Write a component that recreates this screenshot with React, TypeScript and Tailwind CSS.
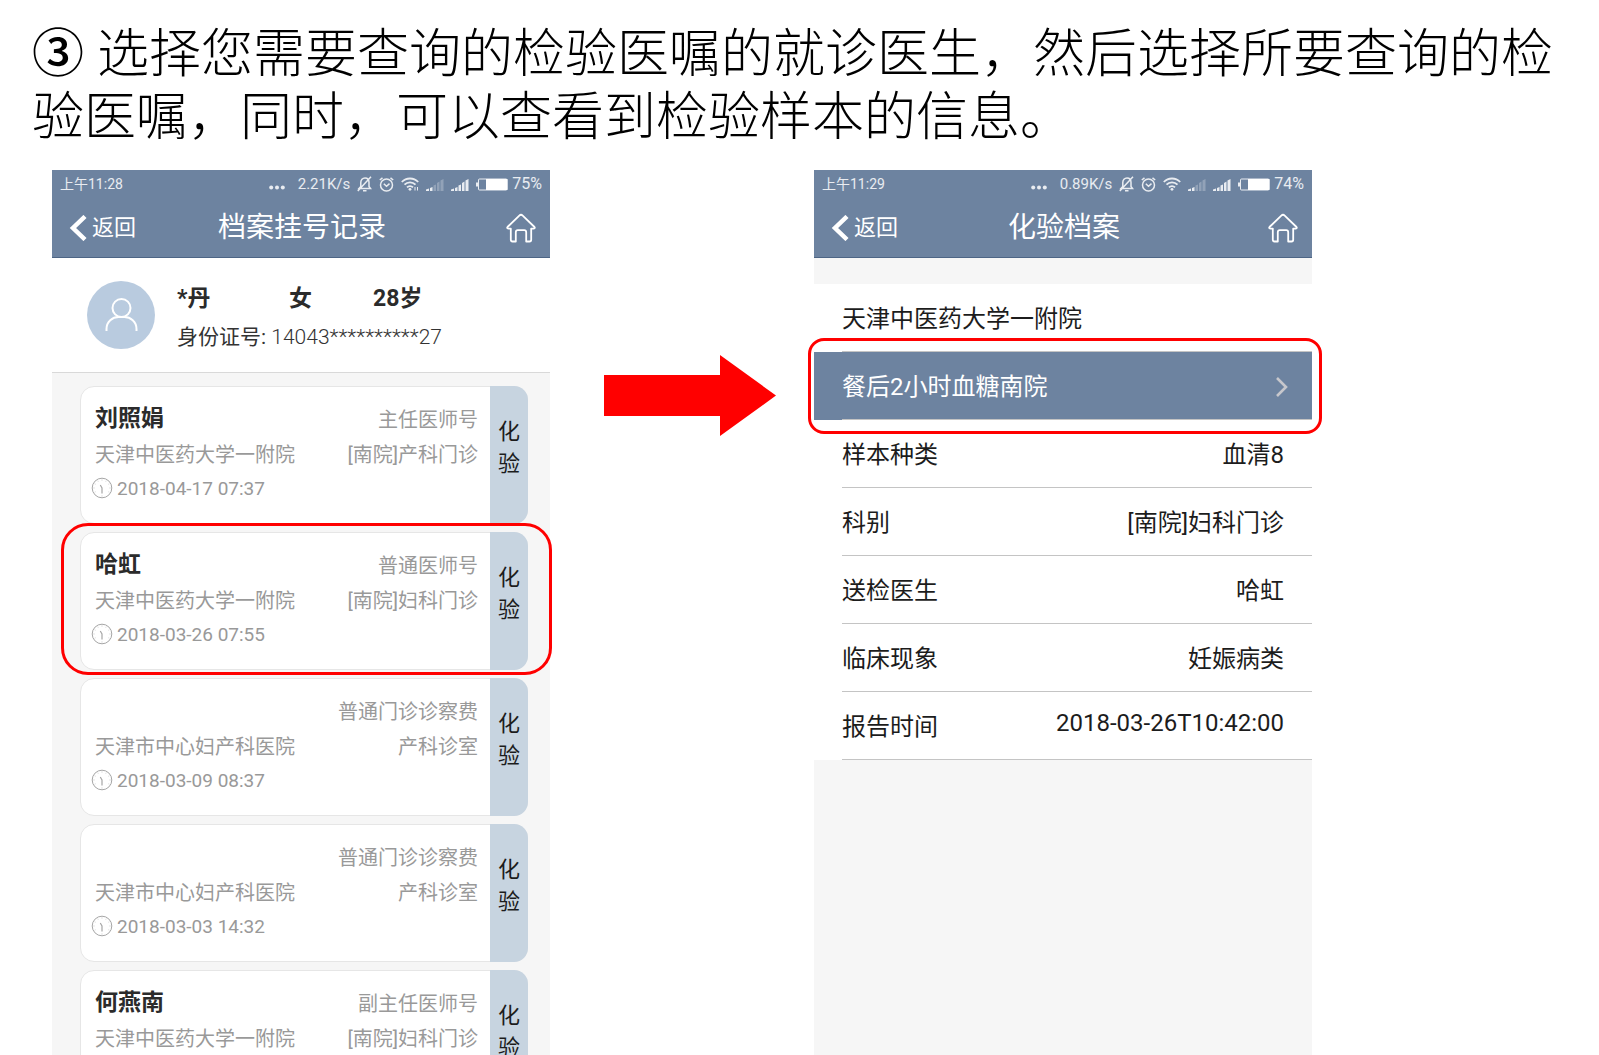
import { ReactNode } from 'react';

interface Visit {
    id: number;
    doctor: string;
    hospital: string;
    type: string;
    department: string;
    time: string;
    marked?: boolean;
}

interface ReportField {
    label: string;
    value: string;
    raised?: boolean;
}

const visits: Visit[] = [
    { id: 1, doctor: '刘照娟', hospital: '天津中医药大学一附院', type: '主任医师号', department: '[南院]产科门诊', time: '2018-04-17 07:37' },
    { id: 2, doctor: '哈虹', hospital: '天津中医药大学一附院', type: '普通医师号', department: '[南院]妇科门诊', time: '2018-03-26 07:55', marked: true },
    { id: 3, doctor: '', hospital: '天津市中心妇产科医院', type: '普通门诊诊察费', department: '产科诊室', time: '2018-03-09 08:37' },
    { id: 4, doctor: '', hospital: '天津市中心妇产科医院', type: '普通门诊诊察费', department: '产科诊室', time: '2018-03-03 14:32' },
    { id: 5, doctor: '何燕南', hospital: '天津中医药大学一附院', type: '副主任医师号', department: '[南院]妇科门诊', time: '' },
];

const fields: ReportField[] = [
    { label: '样本种类', value: '血清8' },
    { label: '科别', value: '[南院]妇科门诊' },
    { label: '送检医生', value: '哈虹' },
    { label: '临床现象', value: '妊娠病类' },
    { label: '报告时间', value: '2018-03-26T10:42:00', raised: true },
];

const SignalIcon = ({ weak }: { weak?: boolean }) => (
    <svg width="18" height="13" viewBox="0 0 18 13" fill="currentColor">
        <path d="M0 13v-1.500l3-1V13z" />
        <path d="M4 13V10l2.500-1v4z" />
        <g opacity={weak ? 0.3 : 1}>
            <path d="M7.500 13V7.500l2.500-1V13z" />
            <path d="M11 13V5l2.500-1.500V13z" />
            <path d="M14.500 13V2.500L17.500 1v12z" />
        </g>
    </svg>
);

const StatusBar = ({ time, speed, battery, wifiData }: { time: string; speed: string; battery: string; wifiData?: boolean }) => (
    <div className="flex h-7 items-center justify-between px-2 text-white/85">
        <span className="text-sm">{time}</span>
        <div className="flex items-center gap-[7px] text-[15px]">
            <svg width="16" height="5" viewBox="0 0 16 5" fill="currentColor" className="mt-1.5 mr-1.5">
                <circle cx="2.200" cy="2.500" r="2" />
                <circle cx="8" cy="2.500" r="2" />
                <circle cx="13.800" cy="2.500" r="2" />
            </svg>
            <span>{speed}</span>
            <svg width="15" height="16" viewBox="0 0 15 16" fill="none" stroke="currentColor" strokeWidth="1.500">
                <path d="M2 12.500h11.500l-1.500-2V6.500C12 4 10.500 2 8 2S3.800 4 3.800 6.500v4zM6 14.800h3.500M14 .8.8 15" />
            </svg>
            <svg width="15" height="15" viewBox="0 0 15 15" fill="none" stroke="currentColor" strokeWidth="1.500">
                <circle cx="7.500" cy="8" r="6" />
                <path d="M4.800 6.800l2.700 2.400 3-2.600M.8 3 3.500.8M14.200 3 11.500.8" />
            </svg>
            <svg width="18" height="14" viewBox="0 0 18 14" fill="none" stroke="currentColor" strokeWidth="1.800">
                <path d="M.8 5c4.500-4.700 11.900-4.700 16.400 0M3.500 7.700c3-3.200 8-3.200 11 0M6 10.300c1.700-1.700 4.300-1.700 6 0" />
                <circle cx="9" cy="12.300" r="1.400" fill="currentColor" stroke="none" />
                {wifiData && <path d="M14 10v3.500M16.500 10v3.500" strokeWidth="1" />}
            </svg>
            <SignalIcon weak />
            <SignalIcon />
            <div className="flex items-center gap-1">
                <svg width="32" height="13" viewBox="0 0 32 13">
                    <path d="M0 4.500h2v4H0z" fill="currentColor" />
                    <rect x="2.500" y="1" width="28.500" height="11" rx="1" fill="none" stroke="currentColor" strokeWidth="1" />
                    <path d="M10 1h21.500v11H10z" fill="#fff" />
                </svg>
                <span className="text-base">{battery}</span>
            </div>
        </div>
    </div>
);

const PhoneHeader = ({ title, children }: { title: string; children: ReactNode }) => (
    <header className="border-b border-[#4d6585] bg-[#6d83a0]">
        {children}
        <div className="grid h-[59px] grid-cols-[1fr_auto_1fr] items-center pr-3.5 pl-4 text-white">
            <button className="flex items-center gap-1 justify-self-start text-[22px]">
                <svg width="20" height="26" viewBox="0 0 20 26" fill="none" stroke="currentColor" strokeWidth="4.500">
                    <path d="M17 1.500 5 13l12 11.500" />
                </svg>
                返回
            </button>
            <h2 className="text-[28px]">{title}</h2>
            <button aria-label="首页" className="justify-self-end">
                <svg width="30" height="30" viewBox="0 0 30 30" fill="none" stroke="currentColor" strokeWidth="1.800" strokeLinejoin="round">
                    <path d="M13.300 2.600Q15 1 16.700 2.600L28.500 14c.8 1-.2 1.700-1 1.600h-2.300v11.200q0 1.700-1.700 1.700h-3.300v-9.300q0-2-2-2h-6.400q-2 0-2 2v9.300H6.500q-1.700 0-1.700-1.700V15.600H2.500c-.8 0-1.800-.7-1-1.600z" />
                </svg>
            </button>
        </div>
    </header>
);

const VisitCard = ({ visit }: { visit: Visit }) => (
    <li className="relative flex h-[138px] rounded-[14px] border border-[#e6e6e6] bg-white">
        <div className="min-w-0 flex-1 pt-[15px] pr-3 pl-[14px] text-xl text-[#999]">
            <div className="flex h-[35px] items-center justify-between">
                <h3 className="text-[23px] font-bold text-[#2b2b2b]">{visit.doctor}</h3>
                <span>{visit.type}</span>
            </div>
            <div className="flex h-[35px] items-center justify-between">
                <span>{visit.hospital}</span>
                <span>{visit.department}</span>
            </div>
            <div className="-ml-1 flex h-[35px] items-center gap-1">
                <svg width="22" height="22" viewBox="0 0 22 22" fill="none" stroke="#a6a6a6" className="mb-1">
                    <circle cx="11" cy="11" r="9.800" />
                    <path d="M11 10.500v6M11 11 9.300 8" strokeWidth="1.200" />
                    <path d="M11 2.500v1M11 18.500v1M2.500 11h1M18.500 11h1M6.800 3.700l.4.8M15.200 3.700l-.4.8M3.700 6.800l.8.4M18.300 6.800l-.8.4M3.700 15.200l.8-.4M18.300 15.200l-.8-.4" strokeWidth=".6" />
                </svg>
                <time className="text-[19px]">{visit.time}</time>
            </div>
        </div>
        <button className="-my-px -mr-px flex w-[38px] flex-col items-center rounded-r-[14px] bg-[#c7d4e0] pt-[30px] text-[22px] leading-8 text-[#1c1c1c]">
            <span>化</span>
            <span>验</span>
        </button>
        {visit.marked && <div className="pointer-events-none absolute -top-[10px] -right-[25px] -bottom-[6px] -left-5 z-10 rounded-[27px] border-3 border-[#f00]" />}
    </li>
);

const RecordsPhone = () => (
    <section className="bg-[#f6f6f6]">
        <PhoneHeader title="档案挂号记录">
            <StatusBar time="上午11:28" speed="2.21K/s" battery="75%" wifiData />
        </PhoneHeader>
        <div className="flex h-[115px] items-center gap-[22px] border-b border-[#d9d9d9] bg-white px-[35px] text-[#333]">
            <svg width="68" height="68" viewBox="0 0 68 68" fill="none" stroke="#fff" strokeWidth="2" className="shrink-0">
                <circle cx="34" cy="34" r="34" fill="#b9cbdf" stroke="none" />
                <circle cx="34.500" cy="27" r="9" />
                <path d="M19.500 50v-2c0-7.500 6-12 12-12h6c6 0 12 4.500 12 12v2" />
            </svg>
            <div className="pt-1">
                <div className="grid grid-cols-[112px_84px_auto] text-[23px] leading-10 font-bold text-[#2b2b2b]">
                    <span>*丹</span>
                    <span>女</span>
                    <span>28岁</span>
                </div>
                <p className="text-[21px] leading-9">身份证号: <span className="font-light">14043**********27</span></p>
            </div>
        </div>
        <ul className="flex flex-col gap-2 pt-[13px] pr-[22px] pl-7">
            {visits.map((v) => <VisitCard key={v.id} visit={v} />)}
        </ul>
    </section>
);

const ReportPhone = () => (
    <section className="bg-[#f6f6f6]">
        <PhoneHeader title="化验档案">
            <StatusBar time="上午11:29" speed="0.89K/s" battery="74%" />
        </PhoneHeader>
        <div className="mt-[26px] bg-white text-2xl text-[#1c1c1c]">
            <div className="ml-7 flex h-17 items-center border-b border-[#c4c4c4] pt-0.5">天津中医药大学一附院</div>
            <div className="relative">
                <button className="flex h-17 w-full bg-[#6d83a0] pl-7 text-white">
                    <span className="flex h-full flex-1 items-center justify-between border-b border-[#c4c4c4] pt-0.5 pr-6">
                        餐后2小时血糖南院
                        <svg width="12" height="20" viewBox="0 0 12 20" fill="none" stroke="#c7c7cc" strokeWidth="2.600">
                            <path d="M1 1l9 9-9 9" />
                        </svg>
                    </span>
                </button>
                <div className="pointer-events-none absolute -top-[14px] -right-[10px] -bottom-[14px] -left-[6px] z-10 rounded-2xl border-3 border-[#f00]" />
            </div>
            <dl className="pl-7">
                {fields.map((f) => (
                    <div key={f.label} className="flex h-17 items-center justify-between border-b border-[#c4c4c4] pt-0.5 pr-7">
                        <dt>{f.label}</dt>
                        <dd className={f.raised ? 'pb-2' : ''}>{f.value}</dd>
                    </div>
                ))}
            </dl>
        </div>
    </section>
);

const App = () => {
    return (
        <main className="h-screen overflow-hidden bg-white font-[Roboto,'Noto_Sans_CJK_SC',sans-serif]">
            <h1 className="h-[170px] pt-[23px] pl-8 font-['Liberation_Serif','Noto_Sans_CJK_SC',serif] text-[52px] leading-[63px] font-light text-black">
                <span className="font-medium">③</span> 选择您需要查询的检验医嘱的就诊医生，然后选择所要查询的检
                <br />
                验医嘱，同时，可以查看到检验样本的信息。
            </h1>
            <div className="grid grid-cols-[498fr_264fr_498fr] pr-[287px] pl-13">
                <RecordsPhone />
                <svg width="172" height="81" viewBox="0 0 172 81" fill="#f00" className="mt-[185px] ml-[54px]">
                    <path d="M0 20h116V0l56 40.500L116 81V61H0z" />
                </svg>
                <ReportPhone />
            </div>
        </main>
    );
};

export default App;
